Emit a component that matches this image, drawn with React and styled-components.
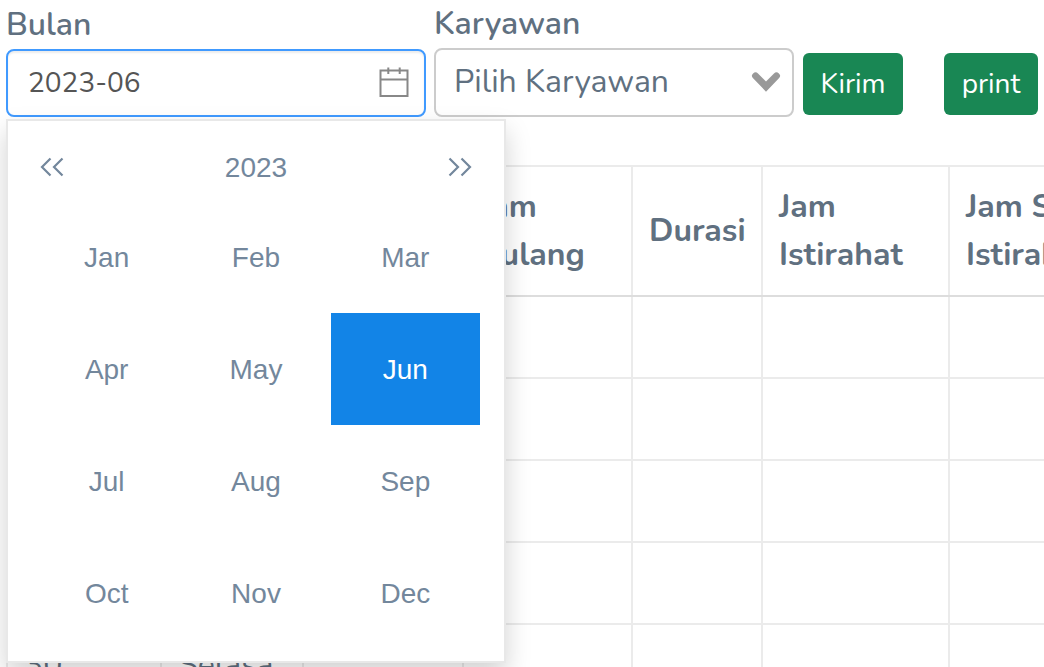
import React, { useState } from "react";
import styled, { createGlobalStyle } from "styled-components";

const GlobalStyle = createGlobalStyle`
  *, *::before, *::after { box-sizing: border-box; }
  body {
    margin: 0;
    background: #fff;
    color: #607080;
    font: 400 32px/48px Nunito, Lato, sans-serif;
  }
  button, input, select { font-family: inherit; margin: 0; }
`;

const Page = styled.main`
  height: 100vh;
  overflow: hidden;
`;

const Toolbar = styled.form`
  display: flex;
  align-items: flex-end;
  gap: 8px;
  padding: 0 6px;
`;

const Field = styled.div`
  position: relative;
  flex: 0 0 ${(p) => p.$basis}px;
`;

const Label = styled.label`
  display: block;
  line-height: 48px;
  font-weight: 600;
`;

const Control = styled.div`
  position: relative;
`;

const MonthInput = styled.input`
  display: block;
  width: 100%;
  height: 68px;
  padding: 0 60px 0 20px;
  border: 2px solid #409aff;
  border-radius: 8px;
  outline: none;
  background: #fff;
  box-shadow: inset 0 2px 2px rgba(0, 0, 0, 0.075);
  color: #555;
  font-size: 28px;
`;

const Select = styled.select`
  display: block;
  appearance: none;
  width: 100%;
  height: 69px;
  padding: 0 60px 2px 18px;
  border: 2px solid #ccc;
  border-radius: 8px;
  background: #fff;
  color: #607080;
  font-size: 32px;
`;

const ControlIcon = styled.svg`
  position: absolute;
  top: 50%;
  right: ${(p) => p.$right}px;
  transform: translateY(-50%);
  pointer-events: none;
`;

const Actions = styled.div`
  display: flex;
  flex: 1;
  justify-content: space-between;
  padding: 0 0 2px 1px;
`;

const Button = styled.button`
  height: 62px;
  min-width: ${(p) => p.$width}px;
  padding: 0 16px;
  border: 0;
  border-radius: 6px;
  background: #198754;
  color: #fff;
  font-size: 28px;
  line-height: 42px;
`;

const Popup = styled.div`
  position: absolute;
  z-index: 2;
  top: calc(100% + 2px);
  left: 0;
  width: 500px;
  padding: 12px 24px;
  border: 2px solid #e8e8e8;
  background: #fff;
  box-shadow: 0 12px 24px rgba(0, 0, 0, 0.175);
  color: #73879c;
  font: 28px/42px "Liberation Sans", Helvetica, Arial, sans-serif;
`;

const PopupHeader = styled.div`
  display: flex;
  align-items: center;
  justify-content: space-between;
  height: 68px;
`;

const Year = styled.span`
  padding-top: 2px;
`;

const YearStep = styled.button`
  display: flex;
  padding: 7px;
  border: 0;
  background: none;
  color: inherit;
`;

const Months = styled.div`
  display: grid;
  grid-template-columns: repeat(3, 1fr);
  grid-auto-rows: 112px;
`;

const Month = styled.button`
  padding: 2px 0 0;
  border: 0;
  background: ${(p) => (p.$active ? "#1284e7" : "transparent")};
  color: ${(p) => (p.$active ? "#fff" : "inherit")};
  font-size: 28px;
`;

const TableArea = styled.div`
  margin-top: 48px;
  padding-left: 6px;
  overflow: hidden;
`;

const Table = styled.table`
  width: 1202px;
  table-layout: fixed;
  border-collapse: collapse;
`;

const HeadCell = styled.th`
  height: 130px;
  padding: 16px;
  border: 2px solid #ebebeb;
  border-bottom-color: #ddd;
  text-align: left;
  font-weight: 700;
  white-space: nowrap;
`;

const Cell = styled.td`
  height: 82px;
  padding: 16px;
  border: 2px solid #ebebeb;
`;

const months = ["Jan", "Feb", "Mar", "Apr", "May", "Jun", "Jul", "Aug", "Sep", "Oct", "Nov", "Dec"];
const widths = [154, 142, 160, 169, 130, 187, 260];
const headers = [[], [], [], ["Jam", "Pulang"], ["Durasi"], ["Jam", "Istirahat"], ["Jam Selesai", "Istirahat"]];
const rows = [[], [], [], [], ["30", "Selasa"]];

function DoubleChevron({ right }) {
  return (
    <svg width="26" height="20" viewBox="0 0 26 20" fill="none" stroke="currentColor" strokeWidth="2.2">
      <path
        d={
          right
            ? "M2.500 1.500L11 10l-8.500 8.500M14.500 1.500L23 10l-8.500 8.500"
            : "M11.500 1.500L3 10l8.500 8.500M23.500 1.500L15 10l8.500 8.500"
        }
      />
    </svg>
  );
}

export default function App() {
  const [year, setYear] = useState(2023);
  const [month, setMonth] = useState(5);
  return (
    <>
      <GlobalStyle />
      <Page>
        <Toolbar onSubmit={(e) => e.preventDefault()}>
          <Field $basis={420}>
            <Label htmlFor="bulan">Bulan</Label>
            <Control>
              <MonthInput id="bulan" readOnly value={`${year}-${String(month + 1).padStart(2, "0")}`} />
              <ControlIcon $right={16} width="32" height="32" viewBox="0 0 32 32" fill="none" stroke="#888" strokeWidth="2">
                <path d="M2.500 3.500h27v25.500h-27zM2.500 12.500h27M10.300 0.500v6.500M21.700 0.500v6.500" />
              </ControlIcon>
            </Control>
            <Popup>
              <PopupHeader>
                <YearStep type="button" aria-label="Previous year" onClick={() => setYear(year - 1)}>
                  <DoubleChevron />
                </YearStep>
                <Year>{year}</Year>
                <YearStep type="button" aria-label="Next year" onClick={() => setYear(year + 1)}>
                  <DoubleChevron right />
                </YearStep>
              </PopupHeader>
              <Months>
                {months.map((name, i) => (
                  <Month key={name} type="button" $active={i === month} onClick={() => setMonth(i)}>
                    {name}
                  </Month>
                ))}
              </Months>
            </Popup>
          </Field>
          <Field $basis={360}>
            <Label htmlFor="karyawan">Karyawan</Label>
            <Control>
              <Select id="karyawan">
                <option>Pilih Karyawan</option>
              </Select>
              <ControlIcon $right={13} width="30" height="22" viewBox="0 0 30 22" fill="#999">
                <path d="M2.100 1.400a3.400 3.400 0 0 1 4.900 0L15 9.400l8-8a3.400 3.400 0 0 1 4.900 0 3.400 3.400 0 0 1 0 4.900L15 19.700 2.100 6.300a3.400 3.400 0 0 1 0-4.900z" />
              </ControlIcon>
            </Control>
          </Field>
          <Actions>
            <Button type="submit" $width={100}>Kirim</Button>
            <Button type="button" $width={94}>print</Button>
          </Actions>
        </Toolbar>
        <TableArea>
          <Table>
            <colgroup>
              {widths.map((w, i) => (
                <col key={i} width={w} />
              ))}
            </colgroup>
            <thead>
              <tr>
                {headers.map((lines, i) => (
                  <HeadCell key={i} scope="col">
                    {lines.map((line, n) => (
                      <React.Fragment key={line}>
                        {n > 0 && <br />}
                        {line}
                      </React.Fragment>
                    ))}
                  </HeadCell>
                ))}
              </tr>
            </thead>
            <tbody>
              {rows.map((row, r) => (
                <tr key={r}>
                  {widths.map((_, c) => (
                    <Cell key={c}>{row[c]}</Cell>
                  ))}
                </tr>
              ))}
            </tbody>
          </Table>
        </TableArea>
      </Page>
    </>
  );
}
